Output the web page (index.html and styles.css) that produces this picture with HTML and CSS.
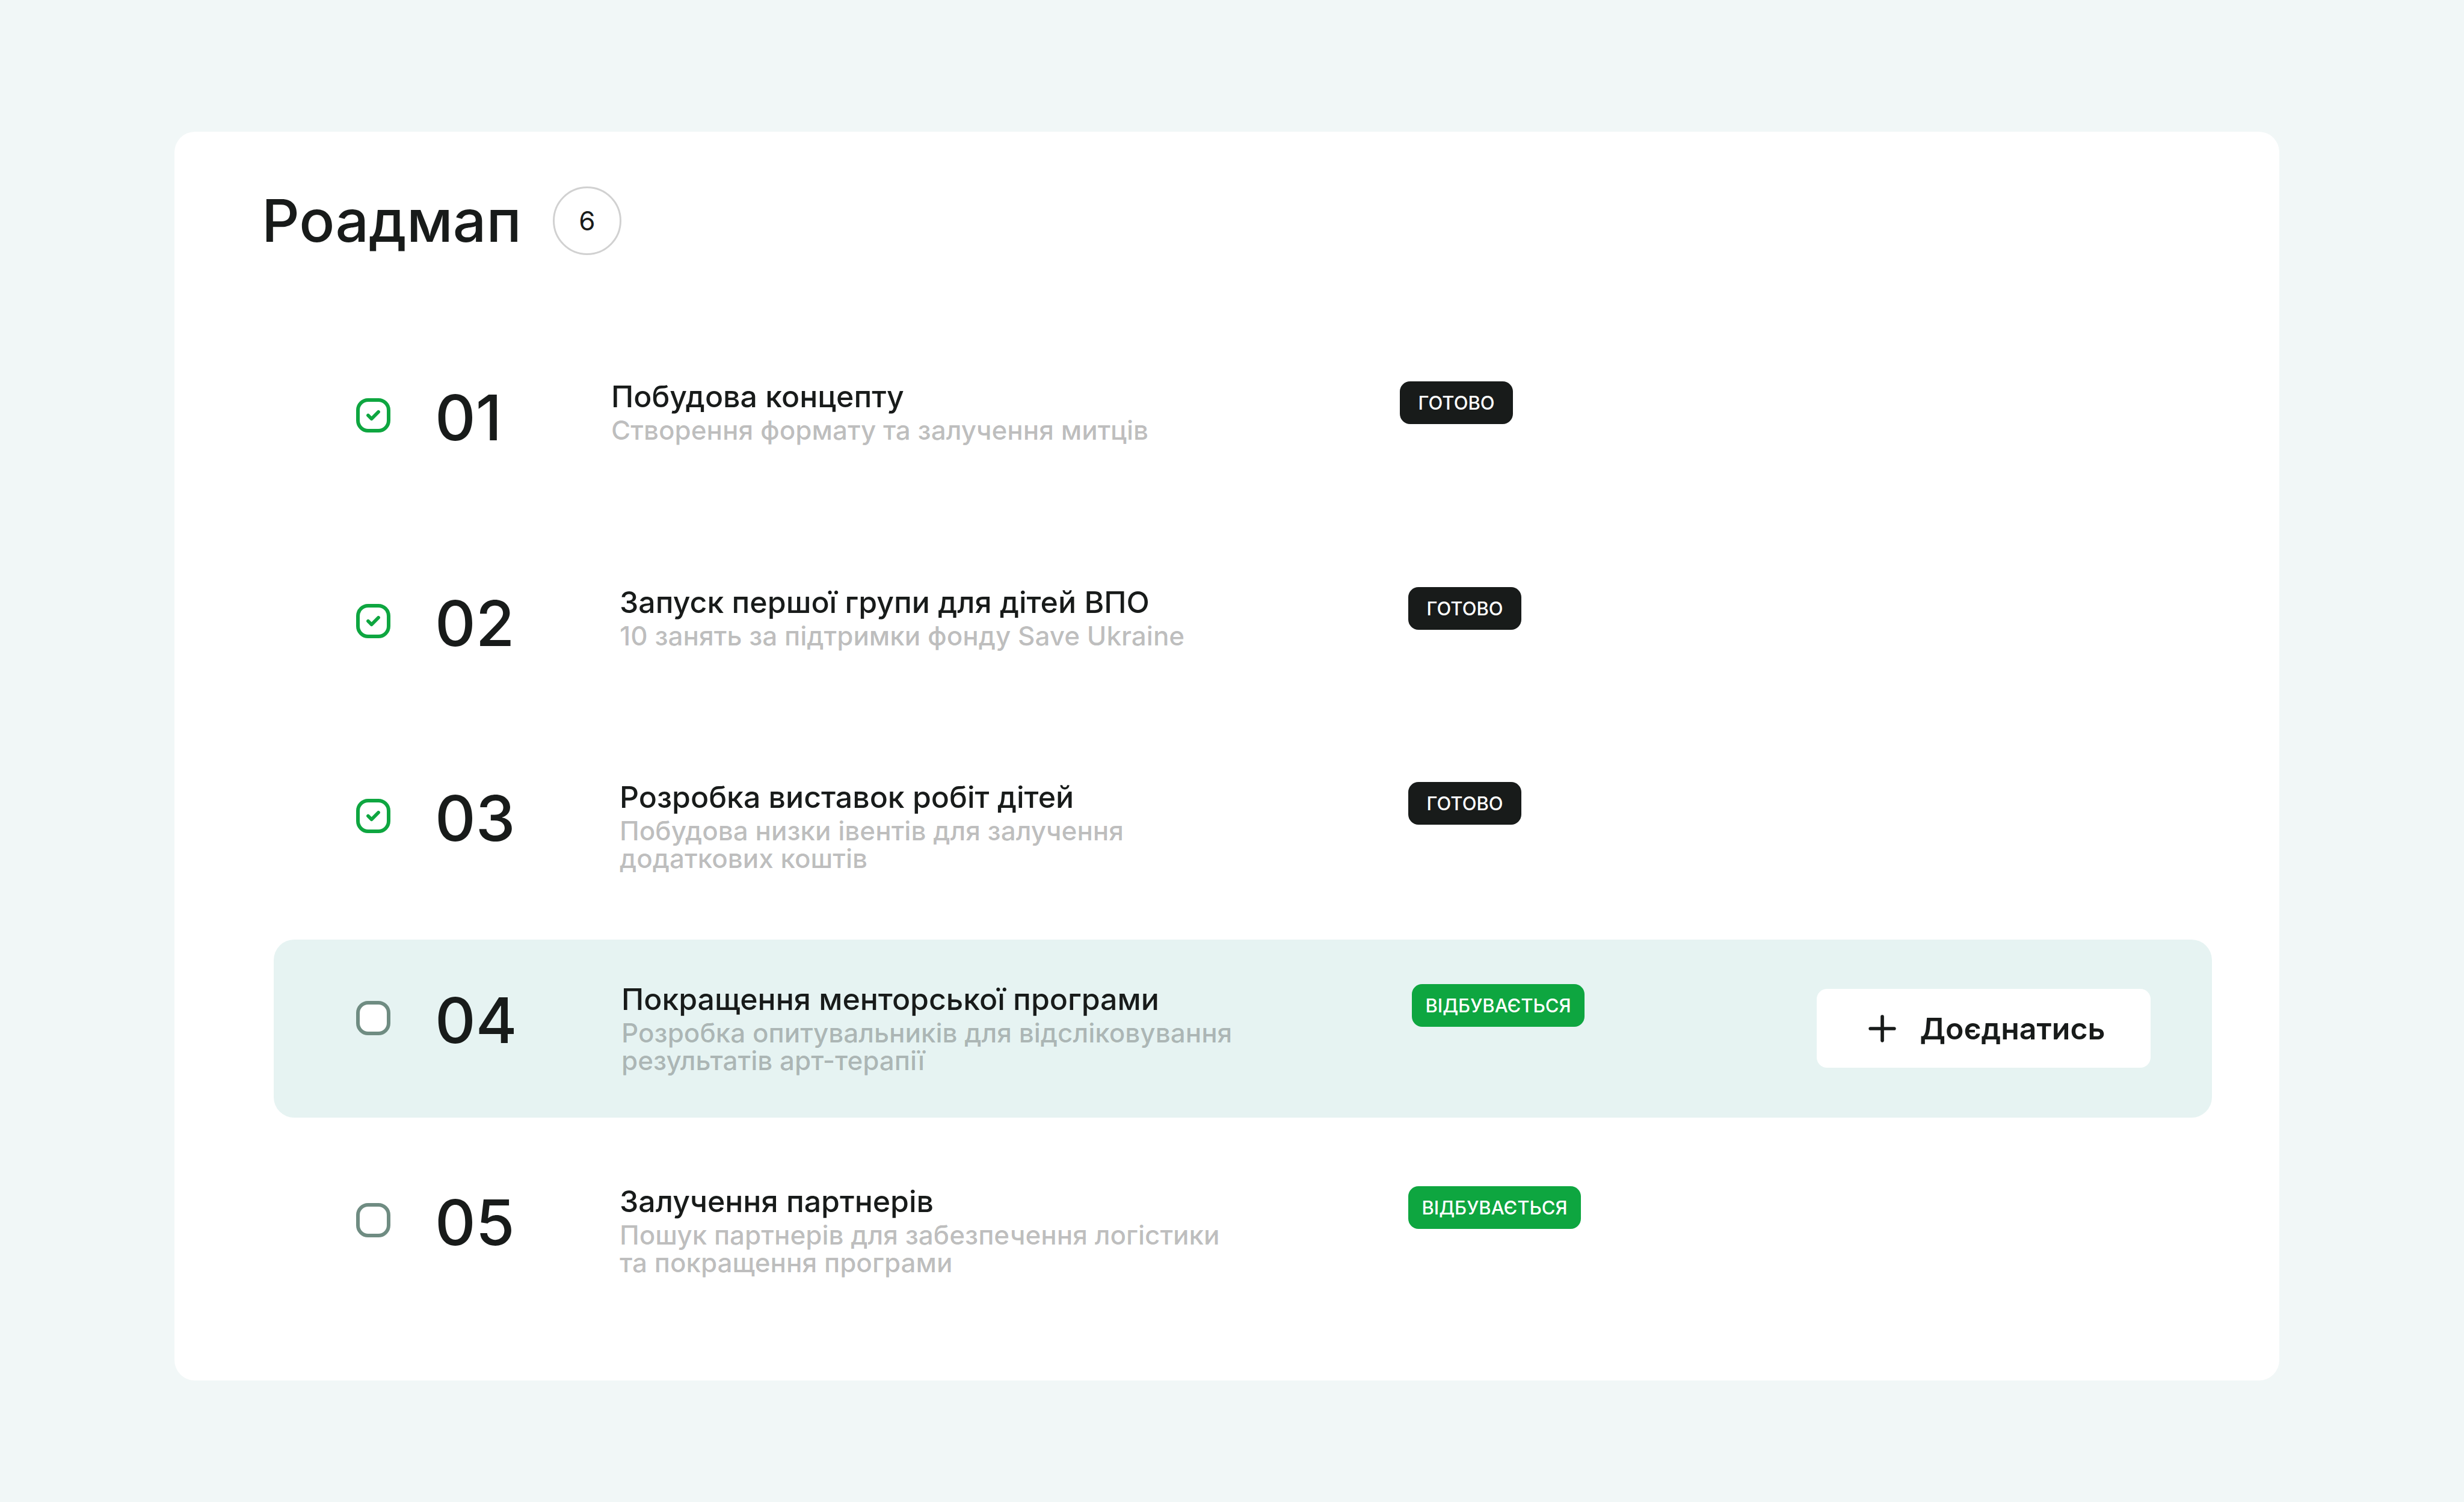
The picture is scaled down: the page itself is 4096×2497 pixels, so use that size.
FILE: index.html
```
<!DOCTYPE html>
<html lang="uk">
<head>
<meta charset="utf-8">
<title>Роадмап</title>
<link rel="stylesheet" href="styles.css">
</head>
<body>
<main class="card">
  <header class="card-header">
    <h1 class="card-title">Роадмап</h1>
    <span class="count">6</span>
  </header>
  <ol class="steps">
    <li class="step step--narrow">
      <span class="tick">
        <input class="tick-input" type="checkbox" id="step-1" checked>
        <svg class="tick-mark" viewBox="0 0 80 80" aria-hidden="true"><path d="M28 40l8 8 16-16"/></svg>
      </span>
      <span class="number">01</span>
      <div class="text">
        <label class="name" for="step-1">Побудова концепту</label>
        <p class="note">Створення формату та залучення митців</p>
      </div>
      <span class="badge badge--done">ГОТОВО</span>
    </li>
    <li class="step step--spaced">
      <span class="tick">
        <input class="tick-input" type="checkbox" id="step-2" checked>
        <svg class="tick-mark" viewBox="0 0 80 80" aria-hidden="true"><path d="M28 40l8 8 16-16"/></svg>
      </span>
      <span class="number">02</span>
      <div class="text">
        <label class="name" for="step-2">Запуск першої групи для дітей ВПО</label>
        <p class="note">10 занять за підтримки фонду Save Ukraine</p>
      </div>
      <span class="badge badge--done">ГОТОВО</span>
    </li>
    <li class="step step--tight">
      <span class="tick">
        <input class="tick-input" type="checkbox" id="step-3" checked>
        <svg class="tick-mark" viewBox="0 0 80 80" aria-hidden="true"><path d="M28 40l8 8 16-16"/></svg>
      </span>
      <span class="number">03</span>
      <div class="text">
        <label class="name" for="step-3">Розробка виставок робіт дітей</label>
        <p class="note">Побудова низки івентів для залучення<br>додаткових коштів</p>
      </div>
      <span class="badge badge--done">ГОТОВО</span>
    </li>
    <li class="step step--current">
      <span class="tick">
        <input class="tick-input" type="checkbox" id="step-4">
      </span>
      <span class="number">04</span>
      <div class="text">
        <label class="name" for="step-4">Покращення менторської програми</label>
        <p class="note">Розробка опитувальників для відсліковування<br>результатів арт-терапії</p>
      </div>
      <span class="badge badge--active">ВІДБУВАЄТЬСЯ</span>
      <button class="join" type="button">
        <svg class="join-icon" viewBox="0 0 96 96" aria-hidden="true"><path d="M48 20v56M20 48h56"/></svg>
        <span>Доєднатись</span>
      </button>
    </li>
    <li class="step">
      <span class="tick">
        <input class="tick-input" type="checkbox" id="step-5">
      </span>
      <span class="number">05</span>
      <div class="text">
        <label class="name" for="step-5">Залучення партнерів</label>
        <p class="note">Пошук партнерів для забезпечення логістики<br>та покращення програми</p>
      </div>
      <span class="badge badge--active">ВІДБУВАЄТЬСЯ</span>
    </li>
  </ol>
</main>
</body>
</html>
```
FILE: styles.css
```
*, *::before, *::after {
  box-sizing: border-box;
}

body {
  margin: 0;
  padding: 219px 307px 202px 290px;
  background: #f1f7f7;
  color: #181b1a;
  font-family: Inter, "Liberation Sans", sans-serif;
  font-weight: 500;
}

.card {
  padding: 91px 112px 101px 145px;
  border-radius: 34px;
  background: #ffffff;
}

.card-header {
  display: flex;
  align-items: center;
  gap: 52px;
  margin-bottom: 136px;
}

.card-title {
  margin: 0;
  font-size: 98px;
  font-weight: 500;
  line-height: 114px;
}

.count {
  display: grid;
  place-items: center;
  width: 114px;
  height: 114px;
  border: 3px solid #d1d1d1;
  border-radius: 50%;
  font-size: 44px;
  font-weight: 400;
  line-height: 48px;
}

.steps {
  margin: 0 0 0 20px;
  padding: 0;
  list-style: none;
}

.step {
  --number-width: 381px;
  --text-width: 1311px;
  display: grid;
  grid-template-columns: 57px var(--number-width) var(--text-width) auto 1fr;
  align-items: start;
  min-height: 296px;
  margin-top: 40px;
  padding: 74px 102px 0 137px;
  border-radius: 34px;
}

.step--narrow {
  --number-width: 367px;
  margin-top: 0;
}

.step--spaced {
  margin-top: 46px;
}

.step--tight {
  margin-top: 28px;
}

.step--current {
  --number-width: 384px;
  --text-width: 1314px;
  background: #e6f3f2;
}

.tick {
  display: grid;
  margin-top: 28px;
}

.tick-input,
.tick-mark {
  grid-area: 1 / 1;
  width: 57px;
  height: 57px;
}

.tick-input {
  appearance: none;
  margin: 0;
  border: 6px solid #6f8c82;
  border-radius: 20px;
  background: #ffffff;
}

.tick-input:checked {
  border-color: #0ea640;
}

.tick-mark {
  fill: none;
  stroke: #0ea640;
  stroke-width: 8;
  stroke-linecap: round;
  stroke-linejoin: round;
  pointer-events: none;
}

.number {
  padding-left: 74px;
  font-size: 105px;
  line-height: 120px;
}

.text {
  display: flex;
  flex-direction: column;
}

.name {
  font-size: 50px;
  line-height: 50px;
}

.note {
  margin: 8px 0 0;
  color: rgba(24, 27, 26, 0.3);
  font-size: 44px;
  line-height: 46px;
}

.badge {
  display: grid;
  place-items: center;
  height: 71px;
  border-radius: 17px;
  color: #ffffff;
  font-size: 31px;
  line-height: 36px;
}

.badge--done {
  width: 188px;
  background: #181b1a;
}

.badge--active {
  width: 287px;
  background: #0ea640;
}

.join {
  display: flex;
  align-items: center;
  justify-content: center;
  gap: 28px;
  justify-self: end;
  width: 555px;
  height: 131px;
  margin-top: 8px;
  padding: 0;
  border: 0;
  border-radius: 17px;
  background: #ffffff;
  color: #181b1a;
  font-family: inherit;
  font-size: 50px;
  font-weight: 600;
  line-height: 56px;
}

.join-icon {
  width: 68px;
  height: 68px;
  fill: none;
  stroke: #181b1a;
  stroke-width: 8;
  stroke-linecap: round;
}
```
